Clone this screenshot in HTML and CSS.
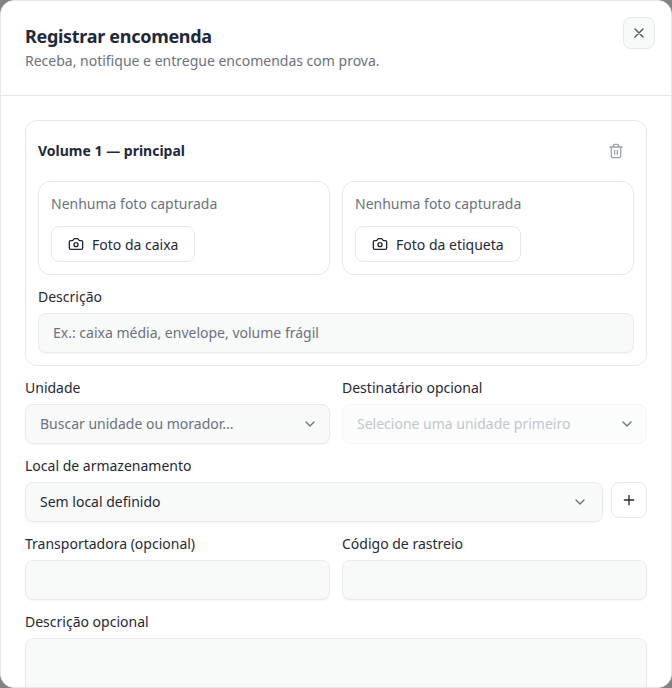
FILE: index.html
```html
<!DOCTYPE html>
<html lang="pt-BR">
<head>
<meta charset="utf-8">
<title>Registrar encomenda</title>
<link rel="stylesheet" href="styles.css">
</head>
<body>
<div class="dialog">
  <header class="head">
    <div>
      <h1 class="title">Registrar encomenda</h1>
      <p class="sub">Receba, notifique e entregue encomendas com prova.</p>
    </div>
    <button class="close" aria-label="Fechar">
      <svg class="ico16" viewBox="0 0 24 24"><path d="M18 6 6 18M6 6l12 12"/></svg>
    </button>
  </header>
  <div class="body">
    <section class="card">
      <div class="card-head">
        <strong class="vol">Volume 1 — principal</strong>
        <svg class="trash" viewBox="0 0 24 24"><path d="M3 6h18M19 6v14a2 2 0 0 1-2 2H7a2 2 0 0 1-2-2V6M8 6V4a2 2 0 0 1 2-2h4a2 2 0 0 1 2 2v2M10 11v6M14 11v6"/></svg>
      </div>
      <div class="grid">
        <div class="tile">
          <p class="none">Nenhuma foto capturada</p>
          <button class="photo"><svg class="ico16" viewBox="0 0 24 24"><path d="M14.500 4h-5L7 7H4a2 2 0 0 0-2 2v9a2 2 0 0 0 2 2h16a2 2 0 0 0 2-2V9a2 2 0 0 0-2-2h-3l-2.500-3z"/><circle cx="12" cy="13" r="3"/></svg>Foto da caixa</button>
        </div>
        <div class="tile">
          <p class="none">Nenhuma foto capturada</p>
          <button class="photo"><svg class="ico16" viewBox="0 0 24 24"><path d="M14.500 4h-5L7 7H4a2 2 0 0 0-2 2v9a2 2 0 0 0 2 2h16a2 2 0 0 0 2-2V9a2 2 0 0 0-2-2h-3l-2.500-3z"/><circle cx="12" cy="13" r="3"/></svg>Foto da etiqueta</button>
        </div>
      </div>
      <div class="field card-field">
        <label class="lab">Descrição</label>
        <div class="input ph"><span class="txt">Ex.: caixa média, envelope, volume frágil</span></div>
      </div>
    </section>
    <div class="grid row">
      <div class="field">
        <label class="lab">Unidade</label>
        <div class="input select ph"><span class="txt">Buscar unidade ou morador...</span><svg class="chev" viewBox="0 0 24 24"><path d="m6 9 6 6 6-6"/></svg></div>
      </div>
      <div class="field">
        <label class="lab">Destinatário opcional</label>
        <div class="input select off"><span class="txt">Selecione uma unidade primeiro</span><svg class="chev" viewBox="0 0 24 24"><path d="m6 9 6 6 6-6"/></svg></div>
      </div>
    </div>
    <div class="field row">
      <label class="lab">Local de armazenamento</label>
      <div class="with-add">
        <div class="input select val"><span class="txt">Sem local definido</span><svg class="chev" viewBox="0 0 24 24"><path d="m6 9 6 6 6-6"/></svg></div>
        <button class="add" aria-label="Adicionar"><svg class="ico16" viewBox="0 0 24 24"><path d="M5 12h14M12 5v14"/></svg></button>
      </div>
    </div>
    <div class="grid row">
      <div class="field">
        <label class="lab">Transportadora (opcional)</label>
        <div class="input"></div>
      </div>
      <div class="field">
        <label class="lab">Código de rastreio</label>
        <div class="input"></div>
      </div>
    </div>
    <div class="field row">
      <label class="lab">Descrição opcional</label>
      <div class="input area"></div>
    </div>
  </div>
</div>
</body>
</html>
```
FILE: styles.css
```css
* { box-sizing: border-box; }
html, body { margin: 0; height: 688px; overflow: hidden; }
html { background: #7f8389; }
body { font-family: "Noto Sans", sans-serif; color: #1f2937; }
.dialog {
  height: 688px;
  background: #fff;
  border: 1px solid #e5e8ec;
  border-radius: 14px;
  overflow: hidden;
}
.head {
  height: 95px;
  padding: 22px 16px 0 24px;
  display: flex;
  justify-content: space-between;
  align-items: flex-start;
  border-bottom: 1px solid #e5e8ec;
}
.title { margin: 0; font-size: 18px; line-height: 26px; font-weight: 700; letter-spacing: -0.3px; color: #1e293b; }
.sub { margin: 1px 0 0; font-size: 14px; line-height: 22px; color: #6b7280; }
.close {
  margin-top: -6px;
  width: 32px; height: 32px;
  padding: 0;
  display: flex; align-items: center; justify-content: center;
  background: #f8f9f9;
  border: 1px solid #e5e8ec;
  border-radius: 8px;
  color: #4b5563;
}
svg { fill: none; stroke: currentColor; stroke-width: 2; stroke-linecap: round; stroke-linejoin: round; display: block; flex: none; }
.ico16 { width: 16px; height: 16px; }
.body { padding: 24px 24px 0; }
.card {
  border: 1px solid #e5e8ec;
  border-radius: 12px;
  padding: 12px;
}
.card-head { height: 36px; margin-bottom: 12px; display: flex; align-items: center; justify-content: space-between; padding-right: 10px; }
.vol { font-size: 14px; line-height: 36px; height: 36px; font-weight: 700; color: #1e293b; }
.trash { width: 16px; height: 16px; color: #9ca3af; }
.grid { display: grid; grid-template-columns: 1fr 1fr; gap: 12px; }
.tile {
  height: 94px;
  border: 1px solid #e5e8ec;
  border-radius: 12px;
  padding: 12px;
}
.none { margin: 0 0 12px; font-size: 14px; line-height: 20px; color: #6b7280; }
.photo {
  height: 36px;
  padding: 0 16px;
  display: inline-flex; align-items: center; gap: 8px;
  background: #fff;
  border: 1px solid #e5e8ec;
  border-radius: 8px;
  font: 400 14px "Noto Sans", sans-serif;
  color: #1f2937;
}
.card-field { margin-top: 12px; }
.lab { display: block; font-size: 14px; line-height: 20px; margin-bottom: 6px; color: #1f2937; }
.input {
  height: 40px;
  background: #f8f9f9;
  border: 1px solid #e8ebee;
  border-radius: 8px;
  box-shadow: 0 1px 2px rgba(0,0,0,.04);
  padding: 0 14px;
  display: flex; align-items: center;
  font-size: 14px;
}
.txt { line-height: 20px; margin-top: -1px; }
.ph { color: #6b7280; }
.val { color: #1f2937; }
.select { justify-content: space-between; padding-right: 11px; }
.val.select { padding-right: 14px; }
.chev { width: 16px; height: 16px; color: #6b7280; }
.off { background: #fbfcfc; border-color: #f3f5f6; color: #c2c6cc; box-shadow: none; }
.row { margin-top: 12px; }
.with-add { display: flex; gap: 8px; }
.with-add .input { flex: 1; }
.add {
  width: 36px; height: 36px;
  padding: 0;
  display: flex; align-items: center; justify-content: center;
  background: #fff;
  border: 1px solid #e5e8ec;
  border-radius: 8px;
  color: #1f2937;
}
.area { height: 80px; }
```
